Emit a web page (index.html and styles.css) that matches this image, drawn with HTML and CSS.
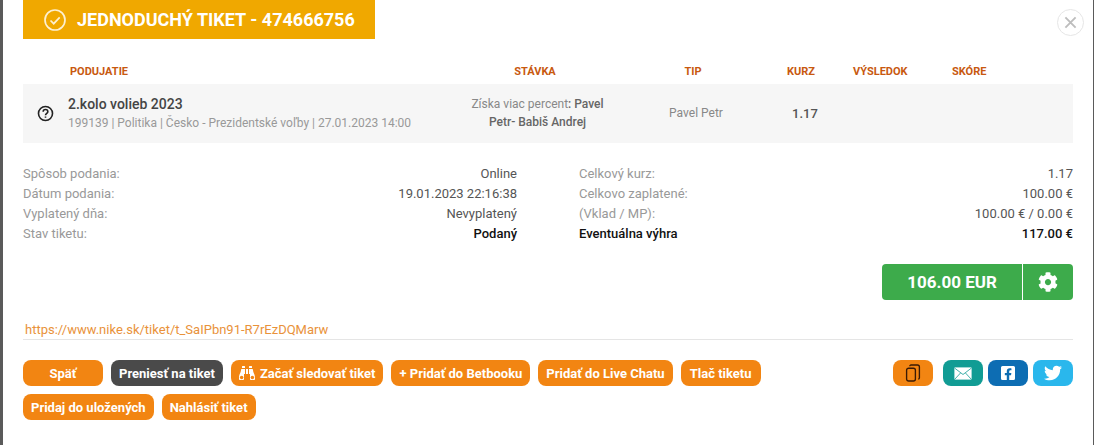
FILE: index.html
```html
<!DOCTYPE html>
<html lang="sk">
<head>
  <meta charset="UTF-8" />
  <title>Jednoduchý tiket</title>
  <link rel="stylesheet" href="styles.css">
</head>
<body>
  <div class="modal">
    <div class="ticket-title">
      <svg class="title-icon" viewBox="0 0 24 24"><circle cx="12" cy="12" r="10"/><path d="M7.500 12.500l3.200 3.200 6-6.400"/></svg>
      <span>JEDNODUCHÝ TIKET - 474666756</span>
    </div>

    <button class="close-btn" aria-label="Zavrieť">
      <svg viewBox="0 0 14 14"><path d="M1.500 1.500l11 11M12.500 1.500l-11 11"/></svg>
    </button>

    <div class="bet-head">
      <div class="head-event">PODUJATIE</div>
      <div class="center">STÁVKA</div>
      <div class="center head-tip">TIP</div>
      <div class="center">KURZ</div>
      <div class="head-result">VÝSLEDOK</div>
      <div class="head-result">SKÓRE</div>
    </div>

    <div class="bet-row">
      <div class="event">
        <svg class="help-icon" viewBox="0 0 16 16"><circle cx="8" cy="8" r="6.600"/><path d="M5.800 6.400c0-1.300 1-2.100 2.200-2.100s2.200.8 2.200 2c0 1.700-2.200 1.600-2.200 3.400"/><path d="M8 10.800v1.200"/></svg>
        <div>
          <div class="event-name">2.kolo volieb 2023</div>
          <div class="event-info">199139 | Politika | Česko - Prezidentské voľby | 27.01.2023 14:00</div>
        </div>
      </div>
      <div class="bet-type">
        <div>Získa viac percent<b>: Pavel</b></div>
        <div><b>Petr- Babiš Andrej</b></div>
      </div>
      <div class="bet-tip">Pavel Petr</div>
      <div class="bet-odds">1.17</div>
    </div>

    <div class="summary">
      <div class="summary-col">
        <div class="line"><span>Spôsob podania:</span><span class="val">Online</span></div>
        <div class="line"><span>Dátum podania:</span><span class="val">19.01.2023 22:16:38</span></div>
        <div class="line"><span>Vyplatený dňa:</span><span class="val">Nevyplatený</span></div>
        <div class="line"><span>Stav tiketu:</span><span class="val strong">Podaný</span></div>
      </div>
      <div class="summary-col">
        <div class="line"><span>Celkový kurz:</span><span class="val">1.17</span></div>
        <div class="line"><span>Celkovo zaplatené:</span><span class="val">100.00 €</span></div>
        <div class="line"><span>(Vklad / MP):</span><span class="val">100.00 € / 0.00 €</span></div>
        <div class="line"><span class="strong">Eventuálna výhra</span><span class="val strong">117.00 €</span></div>
      </div>
    </div>

    <div class="cashout-wrap">
      <div class="cashout">
        <div class="cashout-sum">106.00 EUR</div>
        <div class="cashout-gear">
          <svg viewBox="0 0 512 512"><path d="M487.400 315.700l-42.600-24.600c4.300-23.200 4.300-47 0-70.200l42.600-24.600c4.900-2.800 7.100-8.600 5.500-14-11.100-35.600-30-67.800-54.700-94.600-3.800-4.100-10-5.100-14.800-2.300L380.800 110c-17.900-15.400-38.500-27.300-60.800-35.100V25.800c0-5.600-3.900-10.500-9.400-11.700-36.700-8.200-74.300-7.800-109.200 0-5.500 1.200-9.400 6.100-9.400 11.700V75c-22.200 7.900-42.800 19.800-60.800 35.100L88.700 85.500c-4.900-2.800-11-1.900-14.800 2.300-24.700 26.700-43.600 58.900-54.700 94.600-1.700 5.400.6 11.200 5.500 14L67.300 221c-4.300 23.200-4.300 47 0 70.200l-42.600 24.600c-4.900 2.800-7.100 8.600-5.500 14 11.100 35.600 30 67.800 54.700 94.600 3.800 4.100 10 5.100 14.800 2.300l42.600-24.600c17.900 15.400 38.500 27.300 60.800 35.100v49.200c0 5.600 3.900 10.500 9.400 11.700 36.700 8.200 74.300 7.800 109.200 0 5.500-1.200 9.400-6.100 9.400-11.700v-49.200c22.200-7.900 42.800-19.800 60.800-35.100l42.600 24.600c4.900 2.800 11 1.900 14.800-2.300 24.700-26.700 43.600-58.900 54.700-94.600 1.500-5.500-.7-11.300-5.600-14.100zM256 336c-44.100 0-80-35.900-80-80s35.900-80 80-80 80 35.900 80 80-35.900 80-80 80z"/></svg>
        </div>
      </div>
    </div>

    <div class="ticket-link">https://www.nike.sk/tiket/t_SaIPbn91-R7rEzDQMarw</div>

    <div class="actions">
      <div class="action-list">
        <button class="btn btn-wide">Späť</button>
        <button class="btn btn-dark">Preniesť na tiket</button>
        <button class="btn">
          <svg class="binoculars" viewBox="0 0 512 512"><path d="M416 48c0-8.840-7.160-16-16-16h-64c-8.840 0-16 7.160-16 16v48h96V48zM63.910 159.990C61.400 253.840 3.460 274.220 0 404v44c0 17.670 14.330 32 32 32h96c17.670 0 32-14.330 32-32V288h32V128H95.840c-17.630 0-31.450 14.370-31.930 31.990zm384.180 0c-.48-17.620-14.300-31.990-31.930-31.990H320v160h32v160c0 17.670 14.330 32 32 32h96c17.670 0 32-14.330 32-32v-44c-3.460-129.780-61.400-150.160-63.910-244.010zM176 32h-64c-8.840 0-16 7.160-16 16v48h96V48c0-8.840-7.160-16-16-16zm48 256h64V128h-64v160z"/><circle class="lens" cx="84" cy="398" r="56"/><circle class="lens" cx="428" cy="398" r="56"/></svg>
          Začať sledovať tiket
        </button>
        <button class="btn">+ Pridať do Betbooku</button>
        <button class="btn">Pridať do Live Chatu</button>
        <button class="btn btn-wide">Tlač tiketu</button>
        <button class="btn">Pridaj do uložených</button>
        <button class="btn">Nahlásiť tiket</button>
      </div>
      <div class="share-list">
        <button class="share share-copy">
          <svg viewBox="0 0 20 24"><rect x="2" y="6" width="11" height="16" rx="2.500"/><path d="M6 3.500c0-.8.7-1.500 1.500-1.500h8c1.400 0 2.500 1.100 2.500 2.500V18c0 .8-.7 1.500-1.500 1.500"/></svg>
        </button>
        <button class="share share-mail">
          <svg viewBox="0 0 18 13"><rect width="18" height="13" rx="1"/><path d="M.5 1L9 7.500 17.500 1M.5 12.500L6.500 6M17.500 12.500L11.500 6"/></svg>
        </button>
        <button class="share share-fb">
          <svg viewBox="0 0 448 512"><path d="M400 32H48A48 48 0 0 0 0 80v352a48 48 0 0 0 48 48h137.250V327.690h-63V256h63v-54.640c0-62.150 37-96.480 93.670-96.480 27.140 0 55.520 4.840 55.520 4.840v61h-31.270c-30.810 0-40.420 19.120-40.420 38.730V256h68.780l-11 71.690h-57.780V480H400a48 48 0 0 0 48-48V80a48 48 0 0 0-48-48z"/></svg>
        </button>
        <button class="share share-tw">
          <svg viewBox="0 0 512 512"><path d="M459.370 151.716c.325 4.548.325 9.097.325 13.645 0 138.720-105.583 298.558-298.558 298.558-59.452 0-114.680-17.219-161.137-47.106 8.447.974 16.568 1.299 25.340 1.299 49.055 0 94.213-16.568 130.274-44.832-46.132-.975-84.792-31.188-98.112-72.772 6.498.974 12.995 1.624 19.818 1.624 9.421 0 18.843-1.300 27.614-3.573-48.081-9.747-84.143-51.980-84.143-102.985v-1.299c13.969 7.797 30.214 12.670 47.431 13.319-28.264-18.843-46.781-51.005-46.781-87.391 0-19.492 5.197-37.360 14.294-52.954 51.655 63.675 129.300 105.258 216.365 109.807-1.624-7.797-2.599-15.918-2.599-24.040 0-57.828 46.782-104.934 104.934-104.934 30.213 0 57.502 12.670 76.670 33.137 23.715-4.548 46.456-13.320 66.599-25.340-7.798 24.366-24.366 44.833-46.132 57.827 21.117-2.273 41.584-8.122 60.426-16.243-14.292 20.791-32.161 39.308-52.628 54.253z"/></svg>
        </button>
      </div>
    </div>
  </div>
</body>
</html>
```

FILE: styles.css
```css
html, body {
  height: 100%;
}

body {
  margin: 0;
  background-color: #5a5a5a;
  font-family: 'Roboto', 'Liberation Sans', sans-serif;
  font-size: 12px;
  overflow: hidden;
}

button {
  font-family: inherit;
  border: none;
  cursor: pointer;
}

.modal {
  position: relative;
  height: 445px;
  margin: 0 1px 0 3px;
  padding: 0 20px;
  background: #ffffff;
}

/* Title */
.ticket-title {
  display: flex;
  align-items: center;
  width: 352px;
  height: 39px;
  padding-left: 20px;
  box-sizing: border-box;
  background-color: #f0a800;
  color: #ffffff;
  font-size: 18px;
  font-weight: 700;
}

.title-icon {
  width: 24px;
  height: 24px;
  margin-right: 10px;
  fill: none;
  stroke: #fdf0d0;
  stroke-width: 1.700;
}

.close-btn {
  position: absolute;
  top: 9px;
  right: 9px;
  width: 27px;
  height: 27px;
  padding: 0;
  display: flex;
  align-items: center;
  justify-content: center;
  background: #ffffff;
  border: 1px solid #e6e6e6;
  border-radius: 50%;
}

.close-btn svg {
  width: 13px;
  height: 13px;
  fill: none;
  stroke: #bdbdbd;
  stroke-width: 2;
}

/* Bet table */
.bet-head, .bet-row {
  display: grid;
  grid-template-columns: 427px 170px 148px 66px 99px 1fr;
  align-items: center;
}

.bet-head {
  height: 25px;
  margin-top: 20px;
  color: #c8590f;
  font-size: 11px;
  font-weight: 700;
}

.head-event {
  padding-left: 47px;
}

.head-tip {
  padding-right: 2px;
}

.head-result {
  padding-left: 19px;
}

.center {
  text-align: center;
}

.bet-row {
  height: 59px;
  background-color: #f6f6f6;
}

.event {
  display: flex;
  align-items: center;
  padding-left: 14px;
}

.help-icon {
  width: 17px;
  height: 17px;
  margin-right: 14px;
  fill: none;
  stroke: #222222;
  stroke-width: 1.500;
}

.event-name {
  font-size: 14px;
  font-weight: 500;
  color: #444444;
  line-height: 18px;
}

.event-info {
  color: #999999;
  line-height: 20px;
}

.bet-type {
  padding: 0 0 2px 5px;
  text-align: center;
  color: #888888;
  line-height: 18px;
}

.bet-type b {
  font-weight: 500;
  color: #666666;
}

.bet-tip {
  padding: 0 0 1px 4px;
  text-align: center;
  color: #888888;
}

.bet-odds {
  padding-left: 8px;
  text-align: center;
  font-size: 13px;
  font-weight: 500;
  color: #555555;
}

/* Summary */
.summary {
  display: flex;
  gap: 62px;
  margin-top: 21px;
}

.summary-col {
  flex: 1;
}

.line {
  display: flex;
  justify-content: space-between;
  height: 20px;
  line-height: 20px;
  font-size: 13px;
  color: #999999;
}

.val {
  color: #555555;
}

.strong {
  font-weight: 500;
  color: #111111;
}

.cashout-wrap {
  display: flex;
  justify-content: flex-end;
  margin-top: 20px;
}

.cashout {
  display: flex;
  height: 36px;
  width: 191px;
  background-color: #3dab4b;
  border-radius: 4px;
  color: #ffffff;
}

.cashout-sum {
  flex: 1;
  line-height: 36px;
  text-align: center;
  font-size: 17px;
  font-weight: 700;
  border-right: 1px solid #ffffff;
}

.cashout-gear {
  width: 50px;
  display: flex;
  align-items: center;
  justify-content: center;
}

.cashout-gear svg {
  width: 20px;
  height: 20px;
  fill: #ffffff;
}

.ticket-link {
  margin-top: 19px;
  padding-left: 2px;
  height: 20px;
  line-height: 21px;
  font-size: 13px;
  color: #e9923a;
  border-bottom: 1px solid #e5e5e5;
}

/* Buttons */
.actions {
  display: flex;
  justify-content: space-between;
  margin-top: 20px;
}

.action-list {
  display: flex;
  flex-wrap: wrap;
  gap: 8px;
  width: 760px;
}

.btn {
  height: 26px;
  padding: 0 8px;
  display: flex;
  align-items: center;
  background-color: #f28512;
  color: #ffffff;
  border-radius: 8px;
  font-size: 13px;
  font-weight: 700;
}

.btn-wide {
  width: 80px;
  justify-content: center;
}

.btn-dark {
  background-color: #4a4a4a;
}

.binoculars {
  width: 16px;
  height: 16px;
  margin-right: 5px;
  fill: #ffffff;
}

.lens {
  fill: #f28512;
}

.share-list {
  display: flex;
  gap: 5px;
}

.share {
  width: 40px;
  height: 26px;
  padding: 0;
  display: flex;
  align-items: center;
  justify-content: center;
  border-radius: 8px;
}

.share-copy {
  margin-right: 5px;
  background-color: #f28512;
}

.share-copy svg {
  width: 16px;
  height: 20px;
  fill: none;
  stroke: #3a1a05;
  stroke-width: 1.700;
}

.share-mail {
  background-color: #119c94;
}

.share-mail svg {
  width: 18px;
  height: 13px;
  fill: #ffffff;
  stroke: #119c94;
  stroke-width: 0.800;
}

.share-fb {
  background-color: #0d6db3;
}

.share-fb svg {
  width: 14px;
  height: 16px;
  fill: #ffffff;
}

.share-tw {
  background-color: #2ab7ec;
}

.share-tw svg {
  width: 18px;
  height: 18px;
  fill: #ffffff;
}
```
